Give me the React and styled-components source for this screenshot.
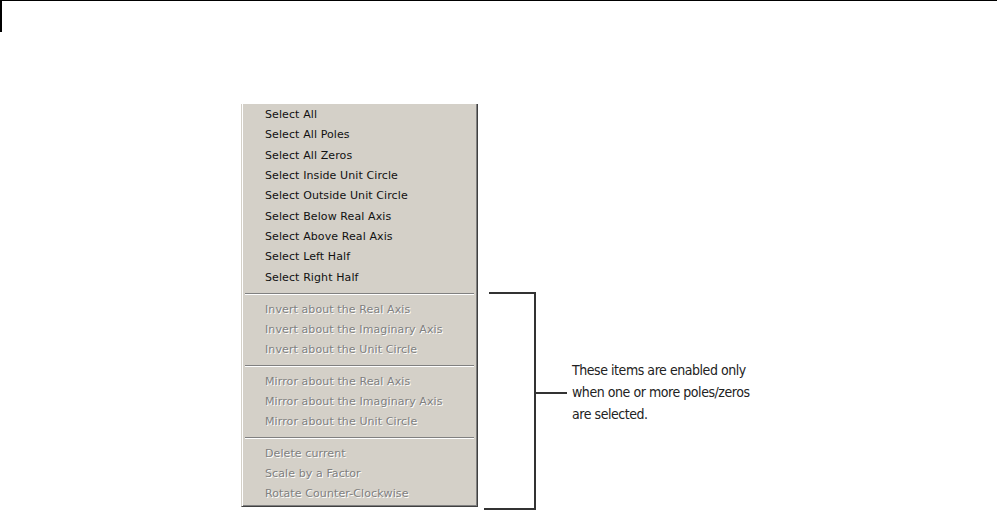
import React from "react"
import styled, { createGlobalStyle } from "styled-components"

const groups = [
  {
    rowHeight: 20.33,
    items: [
      "Select All",
      "Select All Poles",
      "Select All Zeros",
      "Select Inside Unit Circle",
      "Select Outside Unit Circle",
      "Select Below Real Axis",
      "Select Above Real Axis",
      "Select Left Half",
      "Select Right Half",
    ],
  },
  {
    disabled: true,
    items: [
      "Invert about the Real Axis",
      "Invert about the Imaginary Axis",
      "Invert about the Unit Circle",
    ],
  },
  {
    disabled: true,
    items: [
      "Mirror about the Real Axis",
      "Mirror about the Imaginary Axis",
      "Mirror about the Unit Circle",
    ],
  },
  {
    disabled: true,
    items: ["Delete current", "Scale by a Factor", "Rotate Counter-Clockwise"],
  },
]

const GlobalStyle = createGlobalStyle`
  html, body {
    margin: 0;
    padding: 0;
    background: #fff;
    overflow: hidden;
  }
`

const Page = styled.div`
  width: 997px;
  height: 511px;
  border-top: 1px solid #000;
  box-sizing: border-box;
`

const Corner = styled.div`
  width: 0;
  height: 31px;
  border-left: 2px solid #000;
`

const Content = styled.div`
  display: flex;
  align-items: flex-start;
  margin-top: 72px;
  padding-left: 241px;
`

const Menu = styled.div`
  width: 237px;
  box-sizing: border-box;
  background: #d4d0c8;
  border-left: 1px solid #d4d0c8;
  border-right: 1px solid #404040;
  border-bottom: 1px solid #404040;
  box-shadow: inset 1px 0 #fff, inset -1px 0 #808080, inset 0 -1px #808080;
  padding: 1px 2px 2px 2px;
  font-family: "DejaVu Sans", Tahoma, sans-serif;
  font-size: 11px;
  letter-spacing: 0.1px;
`

const Item = styled.div`
  height: ${p => p.$rowHeight || 20}px;
  line-height: ${p => p.$rowHeight || 20}px;
  padding-left: 21px;
  white-space: nowrap;
  color: ${p => (p.$disabled ? "#808080" : "#111")};
  text-shadow: ${p => (p.$disabled ? "1px 1px 0 #fff" : "none")};
`

const Separator = styled.div`
  height: 12px;
  box-sizing: border-box;
  padding: 0 1px;
  display: flex;
  flex-direction: column;
  justify-content: center;

  &::before {
    content: "";
    display: block;
    border-top: 1px solid #808080;
    border-bottom: 1px solid #fff;
  }
`

const Callout = styled.div`
  display: flex;
  align-items: flex-start;
  margin-top: 188px;
  margin-left: 6px;
`

const Note = styled.p`
  margin: 67px 0 0 5px;
  font-family: "Liberation Sans Narrow", "DejaVu Sans Condensed", "Liberation Sans", sans-serif;
  font-size: 14px;
  letter-spacing: -0.45px;
  line-height: 22px;
  color: #222;
`

const Bracket = () => (
  <svg width="83" height="218" viewBox="0 0 83 218">
    <g stroke="#333" strokeWidth="2" fill="none">
      <path d="M5 1 H51 V217 H0" />
      <path d="M51 101 H83" />
    </g>
  </svg>
)

const App = () => (
  <Page>
    <GlobalStyle />
    <Corner />
    <Content>
      <Menu>
        {groups.map((group, i) => (
          <React.Fragment key={i}>
            {i > 0 && <Separator />}
            {group.items.map(text => (
              <Item key={text} $disabled={group.disabled} $rowHeight={group.rowHeight}>
                {text}
              </Item>
            ))}
          </React.Fragment>
        ))}
      </Menu>
      <Callout>
        <Bracket />
        <Note>
          These items are enabled only
          <br />
          when one or more poles/zeros
          <br />
          are selected.
        </Note>
      </Callout>
    </Content>
  </Page>
)

export default App
